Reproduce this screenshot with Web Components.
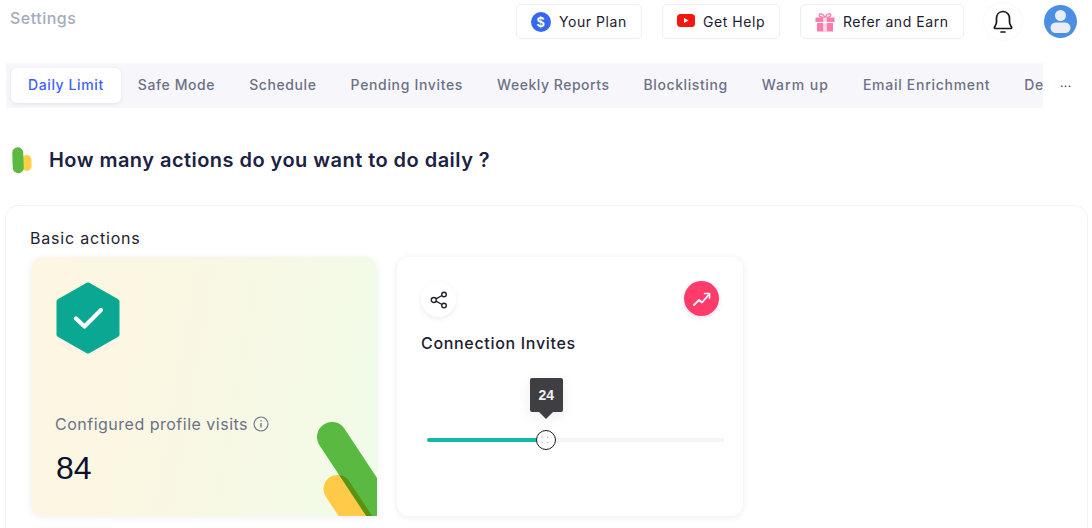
<!DOCTYPE html>
<html>
<head>
<meta charset="utf-8">
<style>
html, body { margin: 0; height: 528px; overflow: hidden; background: #fff; }
body { font-family: Inter, "Liberation Sans", sans-serif; color: #1c2340; }
</style>
</head>
<body>
<settings-page></settings-page>

<script>
const iconPaths = {
	plan: `<svg width="20" height="20" viewBox="0 0 20 20"><circle cx="10" cy="10" r="10" fill="#3668ee"/><text x="10" y="15" text-anchor="middle" font-family="Liberation Sans" font-weight="700" font-size="14" fill="#fff">$</text></svg>`,
	help: `<svg width="18" height="20" viewBox="0 0 18 20"><rect x="0" y="2" width="18" height="13" rx="3.5" fill="#f5170f"/><path d="M7 6l4.600 2.500L7 11z" fill="#fff"/></svg>`,
	gift: `<svg width="20" height="20" viewBox="0 0 20 20"><path d="M10 5.500C8 1 4 1 4.300 3.400 4.500 5 7 5.500 10 5.500zM10 5.500C12 1 16 1 15.700 3.400 15.500 5 13 5.500 10 5.500z" fill="none" stroke="#fd7bab" stroke-width="1.400"/><rect x="0.500" y="5.500" width="19" height="4.500" fill="#fd7bab"/><rect x="2" y="11" width="16" height="8.500" fill="#fd7bab"/><rect x="8.200" y="5.500" width="3.600" height="14" fill="#fff" fill-opacity=".75"/></svg>`
};

const buttonTemplate = document.createElement('template');
buttonTemplate.innerHTML = `
<style>
:host {
	display: flex;
	align-items: center;
	gap: 8px;
	box-sizing: border-box;
	height: 35px;
	padding-left: 14px;
	background: #fff;
	border: 1px solid #eeeef5;
	border-radius: 5px;
	font-size: 14px;
	letter-spacing: .55px;
	color: #1d2030;
}
.icon { display: flex; }
</style>
<span class="icon"></span><slot></slot>
`;

class HeaderButton extends HTMLElement {
	constructor() {
		super();
		this.attachShadow({ mode: 'open' }).append(buttonTemplate.content.cloneNode(true));
	}

	connectedCallback() {
		this.shadowRoot.querySelector('.icon').innerHTML = iconPaths[this.getAttribute('icon')];
		this.style.width = this.getAttribute('width') + 'px';
	}
}

customElements.define('header-button', HeaderButton);

const headerTemplate = document.createElement('template');
headerTemplate.innerHTML = `
<style>
:host {
	display: flex;
	align-items: flex-start;
	height: 63px;
	box-sizing: border-box;
	padding: 3px 15px 0 10px;
}
.title {
	margin-top: 5px;
	margin-right: auto;
	font-size: 16px;
	font-weight: 500;
	line-height: 20px;
	letter-spacing: .5px;
	color: #a6aabd;
}
.actions { display: flex; align-items: center; gap: 20px; }
.bell {
	display: flex;
	align-items: center;
	justify-content: center;
	width: 38px;
	height: 37px;
	border-radius: 50%;
	box-shadow: 0 0 3px #f0eef4;
}
.avatar { display: flex; margin-left: 2px; }
</style>
<div class="title">Settings</div>
<div class="actions">
	<slot></slot>
	<div class="bell">
		<svg width="22" height="26" viewBox="0 0 22 26" fill="none" stroke="#17181c" stroke-width="1.700" stroke-linecap="round" stroke-linejoin="round">
			<path d="M11 2.500C6.500 2.500 4.500 6 4.500 9.500V13C4.500 15.500 3 17 2.500 18C2 19 2.700 19.500 3.500 19.500H18.500C19.300 19.500 20 19 19.500 18C19 17 17.500 15.500 17.500 13V9.500C17.500 6 15.500 2.500 11 2.500Z"/>
			<path d="M9 23h4"/>
		</svg>
	</div>
	<div class="avatar">
		<svg width="33" height="33" viewBox="0 0 33 33">
			<defs><clipPath id="face"><circle cx="16.500" cy="16.500" r="16.500"/></clipPath></defs>
			<circle cx="16.500" cy="16.500" r="16.500" fill="#4b8fe3"/>
			<g clip-path="url(#face)" fill="#e9edf6">
				<circle cx="16.500" cy="10.500" r="5.500"/>
				<rect x="6.500" y="17.500" width="20" height="10.500" rx="5.200"/>
			</g>
		</svg>
	</div>
</div>
`;

class AppHeader extends HTMLElement {
	constructor() {
		super();
		this.attachShadow({ mode: 'open' }).append(headerTemplate.content.cloneNode(true));
	}
}

customElements.define('app-header', AppHeader);

const tabTemplate = document.createElement('template');
tabTemplate.innerHTML = `
<style>
:host {
	display: flex;
	align-items: center;
	flex: none;
	height: 35px;
	padding: 0 17px 2px;
	box-sizing: border-box;
	border-radius: 6px;
	font-size: 14px;
	font-weight: 500;
	letter-spacing: var(--track, .6px);
	color: #6c7186;
}
:host([active]) {
	background: #fff;
	color: #3d5ffb;
	box-shadow: 0 1px 4px rgba(40, 40, 90, .1);
}
</style>
<slot></slot>
`;

class TabItem extends HTMLElement {
	constructor() {
		super();
		this.attachShadow({ mode: 'open' }).append(tabTemplate.content.cloneNode(true));
	}
}

customElements.define('tab-item', TabItem);

const tabBarTemplate = document.createElement('template');
tabBarTemplate.innerHTML = `
<style>
:host { display: flex; align-items: center; }
.tabs {
	display: flex;
	align-items: center;
	box-sizing: border-box;
	width: 1037px;
	height: 45px;
	margin-left: 6px;
	padding-left: 5px;
	overflow: hidden;
	background: #f7f7fb;
}
.more {
	margin-left: 17px;
	margin-top: -6px;
	font-size: 12px;
	letter-spacing: .4px;
	color: #3a3a44;
}
</style>
<div class="tabs"><slot></slot></div>
<div class="more">...</div>
`;

class TabBar extends HTMLElement {
	constructor() {
		super();
		this.attachShadow({ mode: 'open' }).append(tabBarTemplate.content.cloneNode(true));
	}
}

customElements.define('tab-bar', TabBar);

const headingTemplate = document.createElement('template');
headingTemplate.innerHTML = `
<style>
:host {
	display: flex;
	align-items: center;
	gap: 16px;
	box-sizing: border-box;
	height: 97px;
	padding: 6px 0 0 12px;
	font-size: 20px;
	font-weight: 600;
	letter-spacing: .46px;
	color: #1b2242;
}
svg { display: block; flex: none; margin-top: 1px; }
</style>
<svg width="21" height="27" viewBox="0 0 21 27">
	<rect x="10" y="8" width="9.500" height="16" rx="4.700" fill="#ffd048"/>
	<rect x="0.500" y="0.300" width="11" height="26" rx="5.500" fill="#5ab941" transform="rotate(-2 6 13)"/>
</svg>
<slot></slot>
`;

class SectionHeading extends HTMLElement {
	constructor() {
		super();
		this.attachShadow({ mode: 'open' }).append(headingTemplate.content.cloneNode(true));
	}
}

customElements.define('section-heading', SectionHeading);

const panelTemplate = document.createElement('template');
panelTemplate.innerHTML = `
<style>
:host {
	display: block;
	box-sizing: border-box;
	height: 323px;
	margin: 0 4px 0 5px;
	padding: 22px 25px 0;
	border: 1px solid #f3f2f8;
	border-bottom: 0;
	border-radius: 14px 14px 0 0;
	background: #fff;
}
.title {
	height: 29px;
	margin-left: -1px;
	font-size: 16px;
	line-height: 20px;
	letter-spacing: .8px;
	color: #1e2230;
}
.cards { display: flex; gap: 20px; }
</style>
<div class="title"></div>
<div class="cards"><slot></slot></div>
`;

class ActionPanel extends HTMLElement {
	constructor() {
		super();
		this.attachShadow({ mode: 'open' }).append(panelTemplate.content.cloneNode(true));
	}

	connectedCallback() {
		this.shadowRoot.querySelector('.title').textContent = this.getAttribute('title');
	}
}

customElements.define('action-panel', ActionPanel);

const statTemplate = document.createElement('template');
statTemplate.innerHTML = `
<style>
:host {
	display: flex;
	flex-direction: column;
	position: relative;
	box-sizing: border-box;
	width: 346px;
	height: 259px;
	padding: 25px 24px 0;
	border-radius: 12px 12px 0 12px;
	overflow: hidden;
	background: linear-gradient(100deg, #fdf6e3 0%, #f9f7e3 45%, #f4fae6 80%, #eefce8 100%);
	box-shadow: 0 1px 6px rgba(90, 90, 170, .1);
}
.hex { display: block; margin-left: 1px; }
.label {
	display: flex;
	align-items: center;
	gap: 5px;
	margin-top: 58px;
	font-size: 16px;
	line-height: 24px;
	letter-spacing: .5px;
	color: #6c7186;
}
.value {
	margin: 13px 0 0 1px;
	font-family: "Liberation Sans", sans-serif;
	font-size: 32px;
	line-height: 38px;
	color: #0c1130;
}
.swoosh { position: absolute; right: 0; bottom: 0; isolation: isolate; }
</style>
<svg class="hex" width="64" height="72" viewBox="0 0 64 72">
	<path d="M32 3 L61 19.500 V52.500 L32 69 L3 52.500 V19.500 Z" fill="#0aa893" stroke="#0aa893" stroke-width="5" stroke-linejoin="round"/>
	<path d="M20 36.500 L28.500 44.500 L45 28" fill="none" stroke="#fff" stroke-width="4.200" stroke-linecap="round" stroke-linejoin="round"/>
</svg>
<div class="label"><slot name="label"></slot>
	<svg width="16" height="16" viewBox="0 0 16 16" fill="none" stroke="#6c7186" stroke-width="1.100">
		<circle cx="8" cy="8" r="7"/>
		<path d="M8 7v4.500" stroke-width="1.300"/>
		<path d="M8 4.300v1.300" stroke-width="1.300"/>
	</svg>
</div>
<div class="value"><slot name="value"></slot></div>
<svg class="swoosh" width="70" height="100" viewBox="307 416 70 100">
	<path d="M337.500 489 L372 541" stroke="#ffca48" stroke-width="28" stroke-linecap="round"/>
	<path d="M332 437 L400 540" stroke="#5ab941" stroke-width="30" stroke-linecap="round" style="mix-blend-mode:multiply"/>
</svg>
`;

class StatCard extends HTMLElement {
	constructor() {
		super();
		this.attachShadow({ mode: 'open' }).append(statTemplate.content.cloneNode(true));
	}
}

customElements.define('stat-card', StatCard);

const sliderTemplate = document.createElement('template');
sliderTemplate.innerHTML = `
<style>
:host { display: block; position: relative; height: 4px; background: #f4f3f7; border-radius: 2px; }
.fill { width: var(--fill, 40%); height: 100%; background: #14b8a6; border-radius: 2px; }
.thumb {
	position: absolute;
	top: 50%;
	left: var(--fill, 40%);
	box-sizing: border-box;
	width: 20px;
	height: 20px;
	margin: -10px 0 0 -10px;
	background: #fff;
	border: 1.500px solid #1b1c24;
	border-radius: 50%;
}
.thumb svg { display: block; margin: 3.500px; }
.tip {
	position: absolute;
	left: var(--fill, 40%);
	bottom: 30px;
	width: 33px;
	height: 34px;
	margin-left: -16px;
	background: #3f3e42;
	border-radius: 2px;
	font-family: "Liberation Sans", sans-serif;
	font-weight: 700;
	font-size: 14px;
	line-height: 34px;
	text-align: center;
	color: #f2f2f2;
	box-shadow: 0 4px 14px rgba(0, 0, 0, .08);
}
.tip::after {
	content: '';
	position: absolute;
	left: 50%;
	top: 100%;
	margin-left: -7px;
	border: 7px solid transparent;
	border-bottom: 0;
	border-top-color: #3f3e42;
}
</style>
<div class="fill"></div>
<div class="thumb">
	<svg width="10" height="10" viewBox="0 0 10 10" fill="#b5b3d0">
		<rect x="1.500" y="1.500" width="1.300" height="1.300"/><rect x="7" y="1.500" width="1.300" height="1.300"/>
		<rect x="1.500" y="7" width="1.300" height="1.300"/><rect x="7" y="7" width="1.300" height="1.300"/>
	</svg>
</div>
<div class="tip"></div>
`;

class RangeSlider extends HTMLElement {
	constructor() {
		super();
		this.attachShadow({ mode: 'open' }).append(sliderTemplate.content.cloneNode(true));
	}

	connectedCallback() {
		this.style.setProperty('--fill', this.getAttribute('fill'));
		this.shadowRoot.querySelector('.tip').textContent = this.getAttribute('value');
	}
}

customElements.define('range-slider', RangeSlider);

const limitTemplate = document.createElement('template');
limitTemplate.innerHTML = `
<style>
:host {
	display: block;
	box-sizing: border-box;
	width: 346px;
	height: 259px;
	padding: 24px 24px 0;
	background: #fff;
	border-radius: 12px;
	box-shadow: 0 1px 6px rgba(90, 90, 170, .13);
}
.top { display: flex; justify-content: space-between; align-items: flex-start; height: 36px; }
.share, .trend {
	display: flex;
	align-items: center;
	justify-content: center;
	width: 35px;
	height: 35px;
	border-radius: 50%;
}
.share { margin-top: 1px; background: #fff; box-shadow: 0 2px 5px rgba(90, 90, 130, .1); }
.trend { background: #ff3b6b; box-shadow: 0 2px 5px rgba(255, 59, 107, .15); }
.name {
	margin-top: 15px;
	font-size: 16px;
	font-weight: 500;
	line-height: 22px;
	letter-spacing: .68px;
	color: #1c2030;
}
::slotted(range-slider) { display: block; margin: 84px 0 0 6px; width: 297px; }
</style>
<div class="top">
	<div class="share">
		<svg width="18" height="18" viewBox="0 0 18 18" fill="none" stroke="#24252c" stroke-width="1.400">
			<circle cx="3.800" cy="9" r="2.500"/>
			<circle cx="14" cy="3.500" r="2.300"/>
			<circle cx="14" cy="14.500" r="2.300"/>
			<path d="M6 7.800L12 4.500M6 10.200L12 13.500"/>
		</svg>
	</div>
	<div class="trend">
		<svg width="20" height="20" viewBox="0 0 20 20" fill="none" stroke="#fff" stroke-width="1.800" stroke-linejoin="round" stroke-linecap="round">
			<path d="M2 16l5-5 3 2.500 7-8"/>
			<path d="M12.500 4.500h5v5" stroke-width="1.600"/>
		</svg>
	</div>
</div>
<div class="name"><slot name="name"></slot></div>
<slot></slot>
`;

class LimitCard extends HTMLElement {
	constructor() {
		super();
		this.attachShadow({ mode: 'open' }).append(limitTemplate.content.cloneNode(true));
	}
}

customElements.define('limit-card', LimitCard);

const pageTemplate = document.createElement('template');
pageTemplate.innerHTML = `
<style>
:host { display: block; }
</style>
<app-header>
	<header-button icon="plan" width="126">Your Plan</header-button>
	<header-button icon="help" width="118">Get Help</header-button>
	<header-button icon="gift" width="164">Refer and Earn</header-button>
</app-header>
<tab-bar>
	<tab-item active>Daily Limit</tab-item>
	<tab-item>Safe Mode</tab-item>
	<tab-item>Schedule</tab-item>
	<tab-item style="--track:.66px">Pending Invites</tab-item>
	<tab-item style="--track:.53px">Weekly Reports</tab-item>
	<tab-item>Blocklisting</tab-item>
	<tab-item style="--track:1px">Warm up</tab-item>
	<tab-item style="--track:.72px">Email Enrichment</tab-item>
	<tab-item>De</tab-item>
</tab-bar>
<section-heading>How many actions do you want to do daily ?</section-heading>
<action-panel title="Basic actions">
	<stat-card>
		<span slot="label">Configured profile visits</span>
		<span slot="value">84</span>
	</stat-card>
	<limit-card>
		<span slot="name">Connection Invites</span>
		<range-slider fill="40%" value="24"></range-slider>
	</limit-card>
</action-panel>
`;

class SettingsPage extends HTMLElement {
	constructor() {
		super();
		this.attachShadow({ mode: 'open' }).append(pageTemplate.content.cloneNode(true));
	}
}

customElements.define('settings-page', SettingsPage);
</script>
</body>
</html>
